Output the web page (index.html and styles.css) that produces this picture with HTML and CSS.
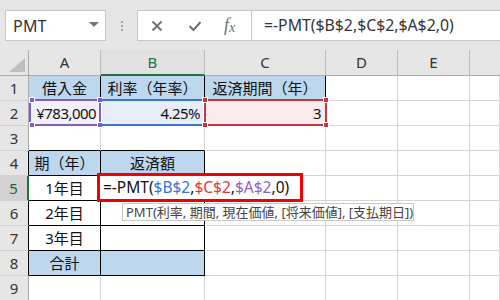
FILE: index.html
```html
<!DOCTYPE html>
<html lang="ja">
<head>
<meta charset="utf-8">
<title>PMT</title>
<link rel="stylesheet" href="styles.css">
</head>
<body>
<div class="app">
  <div class="fbar">
    <div class="namebox"><span class="name">PMT</span><span class="caret"></span></div>
    <div class="grip"><i></i><i></i><i></i></div>
    <div class="btns">
      <svg class="ic" width="12" height="12" viewBox="0 0 12 12"><path d="M1.5 1.5 L10.5 10.5 M10.5 1.5 L1.5 10.5" stroke="#6f6f6f" stroke-width="1.8" fill="none"/></svg>
      <svg class="ic" width="14" height="12" viewBox="0 0 14 12"><path d="M1.5 6 L5.5 10 L12.5 2" stroke="#6f6f6f" stroke-width="2" fill="none"/></svg>
      <span class="fx">f<span class="fxx">x</span></span>
    </div>
    <div class="formula">=-PMT($B$2,$C$2,$A$2,0)</div>
  </div>
  <div class="sheet">
    <div class="corner"><span class="tri"></span></div>
    <div class="ch">A</div><div class="ch sel">B</div><div class="ch">C</div><div class="ch">D</div><div class="ch">E</div><div class="ch last"></div>

    <div class="rh">1</div>
    <div class="c fill bk-r center">借入金</div><div class="c fill bk-r center">利率（年率）</div><div class="c fill bk-r center">返済期間（年）</div><div class="c"></div><div class="c"></div><div class="c"></div>

    <div class="rh">2</div>
    <div class="c right num hl-cell"><span>¥783,000</span><div class="hl hl-a"><b class="h tl"></b><b class="h tr"></b><b class="h bl"></b><b class="h br"></b></div></div>
    <div class="c right num hl-cell"><span>4.25%</span><div class="hl hl-b"></div></div>
    <div class="c right num hl-cell"><span>3</span><div class="hl hl-c"><b class="h tl"></b><b class="h tr"></b><b class="h bl"></b><b class="h br"></b></div></div>
    <div class="c"></div><div class="c"></div><div class="c"></div>

    <div class="rh">3</div>
    <div class="c bk-b"></div><div class="c bk-b"></div><div class="c"></div><div class="c"></div><div class="c"></div><div class="c"></div>

    <div class="rh bk">4</div>
    <div class="c fill bk-r bk-b center">期（年）</div><div class="c fill bk-r bk-b center">返済額</div><div class="c"></div><div class="c"></div><div class="c"></div><div class="c"></div>

    <div class="rh bk selrow">5</div>
    <div class="c bk-r bk-b center">1年目</div><div class="c bk-r bk-b active"></div><div class="c"></div><div class="c"></div><div class="c"></div><div class="c"></div>

    <div class="rh bk">6</div>
    <div class="c bk-r bk-b center">2年目</div><div class="c bk-r bk-b"></div><div class="c"></div><div class="c"></div><div class="c"></div><div class="c"></div>

    <div class="rh bk">7</div>
    <div class="c bk-r bk-b center">3年目</div><div class="c bk-r bk-b"></div><div class="c"></div><div class="c"></div><div class="c"></div><div class="c"></div>

    <div class="rh bk">8</div>
    <div class="c fill bk-r bk-b center">合計</div><div class="c fill bk-r bk-b"></div><div class="c"></div><div class="c"></div><div class="c"></div><div class="c"></div>

    <div class="rh">9</div>
    <div class="c"></div><div class="c"></div><div class="c"></div><div class="c"></div><div class="c"></div><div class="c"></div>

    <div class="edit">=-PMT(<span class="rb">$B$2</span>,<span class="rc">$C$2</span>,<span class="ra">$A$2</span>,0)</div>
    <div class="tip">PMT(利率, 期間, 現在価値, [将来価値], [支払期日])</div>
  </div>
</div>
</body>
</html>
```
FILE: styles.css
```css
* { box-sizing: border-box; }
html, body { margin: 0; padding: 0; }
body {
  width: 500px;
  height: 300px;
  overflow: hidden;
  background: #e6e6e6;
  font-family: "Noto Sans", "Noto Sans CJK JP", sans-serif;
}
.app { width: 500px; height: 300px; overflow: hidden; }

/* formula bar */
.fbar {
  height: 50px;
  display: flex;
  align-items: flex-start;
  padding-top: 10px;
  padding-left: 5px;
}
.namebox {
  width: 101px;
  height: 31px;
  background: #fff;
  border: 1px solid #c6c6c6;
  display: flex;
  align-items: center;
  justify-content: space-between;
  padding: 0 6px 0 7px;
}
.name { font-size: 16px; color: #333; letter-spacing: 0.2px; }
.caret {
  width: 0; height: 0;
  border-left: 5px solid transparent;
  border-right: 5px solid transparent;
  border-top: 5px solid #777;
  margin-top: -3px;
}
.grip {
  width: 31px;
  height: 31px;
  display: flex;
  flex-direction: column;
  align-items: center;
  justify-content: center;
  gap: 2px;
}
.grip i { display: block; width: 2px; height: 2px; background: #a9a9a9; }
.btns {
  width: 114px;
  height: 31px;
  background: #fff;
  border: 1px solid #c6c6c6;
  border-right: none;
  display: flex;
  align-items: center;
  padding-left: 13px;
}
.btns .ic:first-child { margin-right: 25px; }
.btns .ic:nth-child(2) { margin-right: 22px; }
.fx {
  font-family: "Liberation Serif", serif;
  font-style: italic;
  font-size: 18px;
  color: #6f6f6f;
  line-height: 1;
  margin-top: -2px;
}
.fxx { font-size: 14px; margin-left: 0; position: relative; top: 1px; }
.formula {
  flex: 1;
  height: 31px;
  background: #fff;
  border: 1px solid #c6c6c6;
  border-right: none;
  padding-left: 12px;
  font-size: 15.8px;
  color: #333;
  line-height: 29px;
  white-space: nowrap;
}

/* sheet */
.sheet {
  position: relative;
  display: grid;
  grid-template-columns: 29px 72px 104px 121px 72px 72px 1fr;
  grid-template-rows: 26px repeat(9, 25px);
  background: #fff;
  font-family: "Noto Sans", "Noto Sans CJK JP", sans-serif;
}
.corner {
  background: #e6e6e6;
  border-right: 1px solid #ababab;
  border-bottom: 1px solid #ababab;
  position: relative;
}
.tri {
  position: absolute;
  right: 3px;
  bottom: 3px;
  width: 0; height: 0;
  border-left: 16px solid transparent;
  border-bottom: 14px solid #bfbfbf;
}
.ch {
  background: #e6e6e6;
  border-right: 1px solid #bcbcbc;
  border-bottom: 1px solid #ababab;
  text-align: center;
  font-size: 15px;
  color: #333;
  line-height: 24px;
  font-family: "Noto Sans", sans-serif;
}
.ch.sel { color: #217346; border-bottom: 2px solid #217346; background: #e1e1e1; }
.ch.last { border-right: none; }
.rh {
  background: #e6e6e6;
  border-right: 1px solid #ababab;
  border-bottom: 1px solid #d0d0d0;
  text-align: center;
  font-size: 15px;
  color: #333;
  line-height: 24px;
  font-family: "Noto Sans", sans-serif;
}
.rh.bk { border-right-color: #000; }
.rh.selrow { background: #d2d2d2; color: #1f5f3a; border-right: 2px solid #217346; }
.c {
  border-right: 1px solid #d4d4d4;
  border-bottom: 1px solid #d4d4d4;
  font-size: 15px;
  color: #111;
  line-height: 24px;
  white-space: nowrap;
  overflow: visible;
  padding: 0 3px;
}
.c.num { letter-spacing: -0.55px; }
.c.fill { background: #bdd7ee; }
.c.center { text-align: center; }
.c.right { text-align: right; }
.c.bk-r { border-right-color: #000; }
.c.bk-b { border-bottom-color: #000; }
.hl-cell { position: relative; padding-right: 4px; }
.hl-cell span { position: relative; z-index: 2; }
.hl {
  position: absolute;
  top: -2px;
  bottom: -1px;
  left: 0;
  right: -1px;
  border: 2px solid #7e5fc0;
  background: #f4f0fa;
  z-index: 1;
}
.hl-b { border-color: #3b74c9; background: #e8eef9; left: 1px; right: 1px; border-left: none; border-right: none; }
.hl-c { border-color: #c0393f; background: #fbeaeb; left: -1px; right: -2px; }
.h {
  position: absolute;
  width: 6px;
  height: 6px;
  border: 1px solid #fff;
  z-index: 3;
}
.hl-a .h { background: #7e5fc0; }
.hl-c .h { background: #c0393f; }
.h.tl { left: -4px; top: -4px; }
.h.tr { right: -4px; top: -4px; }
.h.bl { left: -4px; bottom: -4px; }
.h.br { right: -4px; bottom: -4px; }
.hl-a .h.tl, .hl-a .h.bl { left: -2px; }

.active { position: relative; }
.active::after {
  content: "";
  position: absolute;
  left: -2px;
  right: -2px;
  bottom: -2px;
  height: 2px;
  background: #217346;
}

.edit {
  position: absolute;
  left: 97px;
  top: 123px;
  width: 206px;
  height: 29px;
  border: 3px solid #f00000;
  background: #fff;
  font-size: 15.5px;
  line-height: 23px;
  color: #111;
  padding-left: 3px;
  white-space: nowrap;
  z-index: 5;
}
.rb { color: #3a72d0; }
.rc { color: #e0363c; }
.ra { color: #8b5fcb; }
.tip {
  position: absolute;
  left: 122px;
  top: 153px;
  width: 292px;
  height: 18px;
  background: #fff;
  border: 1px solid #c8c8c8;
  font-size: 13px;
  line-height: 16px;
  color: #444;
  padding-left: 3px;
  white-space: nowrap;
  z-index: 5;
}
```
